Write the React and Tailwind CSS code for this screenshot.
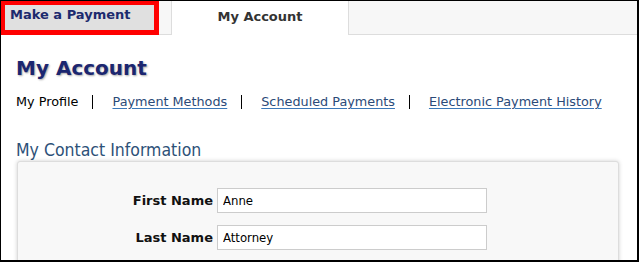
import React from 'react';

const verdana = 'font-["DejaVu_Sans",Verdana,sans-serif]';
const tahoma = 'font-["DejaVu_Sans_Condensed","DejaVu_Sans",sans-serif]';

function SubNav() {
  const links = ['Payment Methods', 'Scheduled Payments', 'Electronic Payment History'];
  return (
    <div className={`flex items-center text-[12.8px] leading-[16px] ${verdana}`}>
      <span className="text-black">My Profile</span>
      {links.map((l) => (
        <React.Fragment key={l}>
          <span className="ml-[14px] mr-[19px] h-[14px] border-l border-black" />
          <a href="#" className="text-[#2b4a78] underline decoration-[#3b78b8] underline-offset-2">
            {l}
          </a>
        </React.Fragment>
      ))}
    </div>
  );
}

function Field({ label, value }) {
  return (
    <div className="flex items-center">
      <label className={`w-[199px] pr-[4px] text-right text-[13px] font-bold text-[#111] ${verdana}`}>
        {label}
      </label>
      <input
        readOnly
        value={value}
        className={`h-[25px] w-[270px] border border-[#cccccc] bg-white px-[5px] text-[13px] text-black outline-none ${tahoma}`}
      />
    </div>
  );
}

export default function App() {
  return (
    <div className="relative h-[262px] w-[639px] overflow-hidden border-l border-t border-r-2 border-b-2 border-black bg-white">
      {/* Tab bar */}
      <div className={`flex h-[34px] text-[13px] font-bold ${verdana}`}>
        <div className="relative w-[171px] border-b border-r border-[#dddddd] bg-[#f7f7f7]">
          {/* highlight box */}
          <div className="absolute -left-px -top-px flex h-[35px] w-[159px] border-[5px] border-[#ff0000] bg-[#e0e0e0]">
            <span className="ml-[5px] mt-[2px] leading-[16px] text-[#1c2a6e]">Make a Payment</span>
          </div>
        </div>
        <div className="flex w-[177px] justify-center border-r border-[#dddddd] bg-white pt-[6px] text-[#333333]">
          My Account
        </div>
        <div className="flex-1 border-b border-[#dddddd] bg-[#f7f7f7]" />
      </div>

      <div className="px-[15px]">
        <h1
          className={`mt-[21px] text-[20px] font-bold leading-[24px] text-[#1b2670] [text-shadow:1px_1px_2px_rgba(0,0,0,0.35)] ${verdana}`}
        >
          My Account
        </h1>
        <div className="mt-[14px]">
          <SubNav />
        </div>
        <h2 className={`mt-[30px] text-[17.5px] leading-[20px] text-[#2d5178] ${tahoma}`}>
          My Contact Information
        </h2>
        <div className="ml-px mt-[1px] h-[120px] w-[602px] rounded-[3px] border border-[#dddddd] bg-[#f8f8f8] shadow-[0_0_4px_rgba(0,0,0,0.18)]">
          <div className="flex flex-col gap-[12px] pt-[26px]">
            <Field label="First Name" value="Anne" />
            <Field label="Last Name" value="Attorney" />
          </div>
        </div>
      </div>
    </div>
  );
}
